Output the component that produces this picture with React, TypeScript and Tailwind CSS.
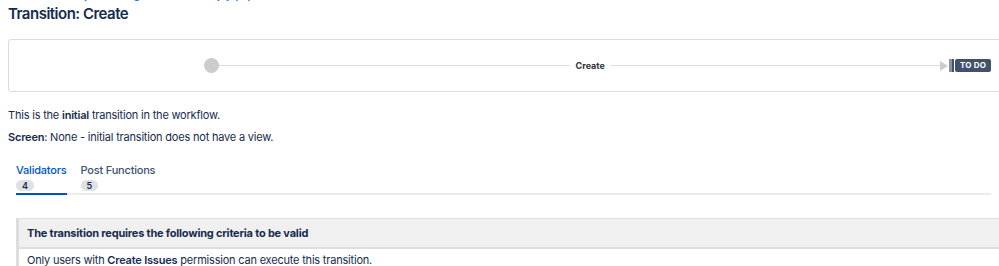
import React from 'react';

const Lozenge: React.FC<{ label: string }> = ({ label }) => (
  <div className="flex items-center">
    <div className="w-[3px] h-[13px] bg-[#8993a4]" />
    <div className="w-[2px] h-[13px] bg-[#42526e]" />
    <span className="ml-[1px] h-[13px] px-[5px] rounded-[2px] bg-[#42526e] text-white text-[8px] font-bold leading-[13px] tracking-[0.2px]">
      {label}
    </span>
  </div>
);

const Tab: React.FC<{ label: string; count: number; active?: boolean }> = ({ label, count, active }) => (
  <div className={active ? '-mb-[2px] border-b-2 border-[#0052cc] pb-[2px]' : '-mb-[2px] border-b-2 border-transparent pb-[2px]'}>
    <div className={active ? 'text-[11px] font-medium leading-[13px] tracking-[-0.2px] text-[#0052cc]' : 'text-[11px] font-medium leading-[13px] tracking-[-0.2px] text-[#42526e]'}>
      {label}
    </div>
    <div className="mt-[3px] w-fit px-[6px] rounded-full bg-[#dfe1e6] text-[9px] font-semibold leading-[11px] text-[#172b4d]">
      {count}
    </div>
  </div>
);

const App: React.FC = () => {
  return (
    <div className="w-[999px] h-[266px] overflow-hidden bg-white text-[#172b4d] font-['Inter',sans-serif]">
      <div className="px-2">
        <div className="h-[2px] overflow-hidden">
          <div className="-mt-[11px] pl-[60px] text-[11px] text-[#0052cc] leading-[12px] tracking-[-0.2px]">
            Project settings / Workflows / jsyqmp / Transition / Create
          </div>
        </div>
        <h1 className="mt-[2px] text-[15px] font-semibold leading-[20px] tracking-[-0.5px] text-[#172b4d]">Transition: Create</h1>

        <div className="mt-[15px] w-[1010px] h-[53px] border border-[#dcdcdc] rounded-[3px] flex items-center">
          <div className="w-[195px]" />
          <div className="w-[15px] h-[15px] rounded-full bg-[#cccccc] shrink-0" />
          <div className="flex-1 h-px bg-[#dddddd]" />
          <span className="px-[6px] text-[9px] font-bold text-[#333333]">Create</span>
          <div className="w-[329px] h-px bg-[#dddddd]" />
          <div className="w-0 h-0 border-y-[5px] border-y-transparent border-l-[8px] border-l-[#cccccc]" />
          <div className="ml-[1px]">
            <Lozenge label="TO DO" />
          </div>
          <div className="w-[26px]" />
        </div>

        <p className="mt-[16px] text-[11px] leading-[14px] tracking-[-0.2px] text-[#172b4d]">
          This is the <b className="font-semibold">initial</b> transition in the workflow.
        </p>
        <p className="mt-[8px] text-[11px] leading-[14px] tracking-[-0.2px] text-[#172b4d]">
          <b className="font-semibold">Screen</b>: None - initial transition does not have a view.
        </p>

        <div className="mt-[20px] ml-[8px] flex gap-[14px] border-b-2 border-[#ebecf0]">
          <Tab label="Validators" count={4} active />
          <Tab label="Post Functions" count={5} />
        </div>

        <div className="mt-[23px] ml-[8px] w-[1000px] border-l-[3px] border-[#dddddd]">
          <div className="h-[31px] bg-[#f0f0f0] border-t border-b-2 border-[#dedede] flex items-center pl-[8px]">
            <span className="text-[11px] font-bold tracking-[-0.2px] text-[#172b4d]">
              The transition requires the following criteria to be valid
            </span>
          </div>
          <div className="pl-[8px] pt-[4px] text-[11px] leading-[14px] tracking-[-0.2px] text-[#172b4d]">
            Only users with <b className="font-semibold">Create Issues</b> permission can execute this transition.
          </div>
        </div>
      </div>
    </div>
  );
};

export default App;
